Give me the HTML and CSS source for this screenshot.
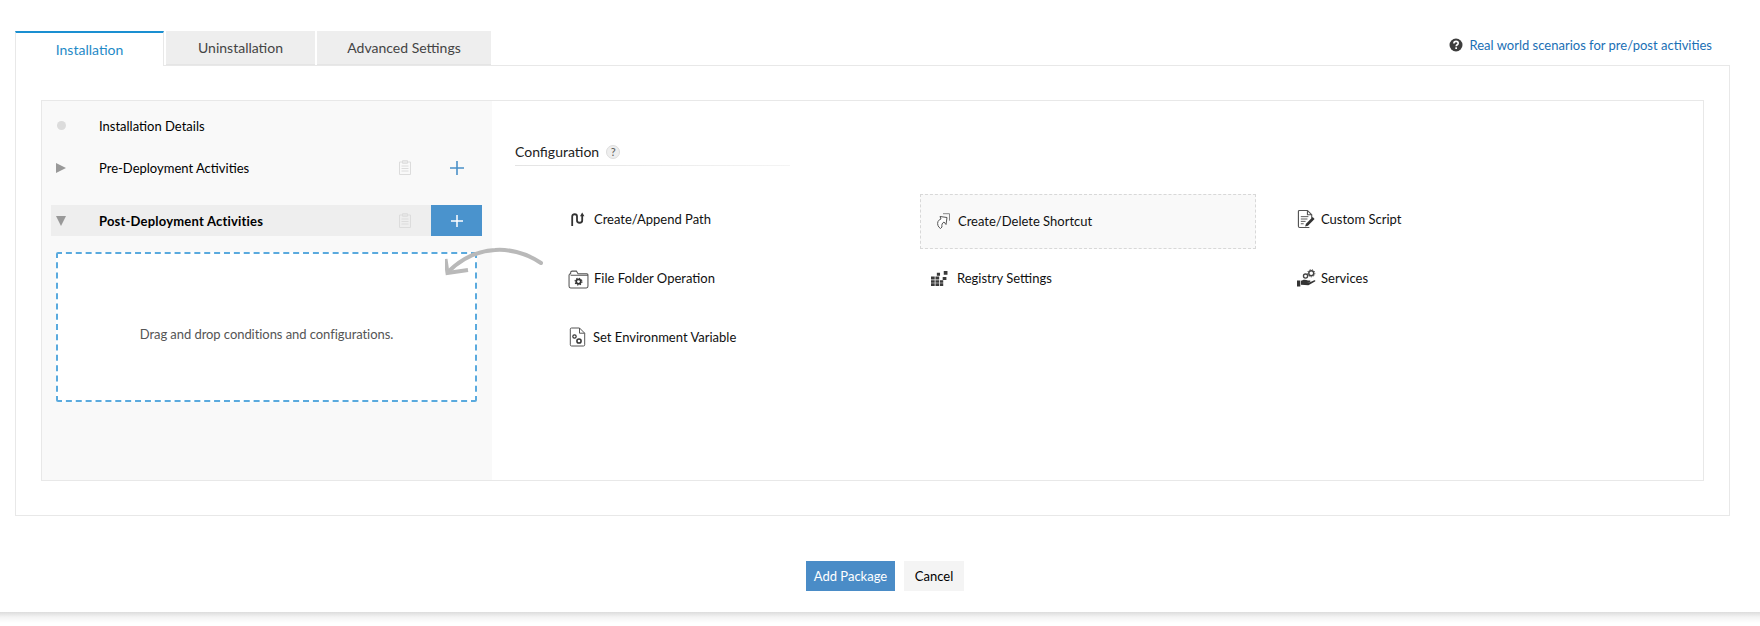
FILE: index.html
```html
<!DOCTYPE html>
<html lang="en">
<head>
<meta charset="utf-8">
<title>Add Package</title>
<link rel="stylesheet" href="styles.css">
</head>
<body>
<div class="page">
  <div class="tabbar">
    <div class="tab tab-active">Installation</div>
    <div class="tab tab-uninstall">Uninstallation</div>
    <div class="tab tab-advanced">Advanced Settings</div>
    <a class="help-link">
      <svg class="help-icon" viewBox="0 0 14 14"><circle cx="7" cy="7" r="6.5" fill="#3d3d3d"/><path d="M4.9 5.4c0-1.3 1-2 2.2-2s2.1.7 2.1 1.8c0 1.600-2 1.500-2 3" fill="none" stroke="#fff" stroke-width="1.600"/><rect x="6.300" y="9.300" width="1.700" height="1.700" fill="#fff"/></svg>
      Real world scenarios for pre/post activities
    </a>
  </div>
  <div class="panel">
    <div class="inner">
      <aside class="side">
        <div class="row row-details">
          <span class="marker"><span class="dot"></span></span>
          <span class="row-label">Installation Details</span>
        </div>
        <div class="row row-pre">
          <span class="marker"><span class="tri-right"></span></span>
          <span class="row-label">Pre-Deployment Activities</span>
          <svg class="clip" viewBox="0 0 12 15"><path d="M.5 2h11v12.500H.5zM3.500 .7h5v2.600h-5zM2.500 6h7M2.500 8.500h7M2.500 11h7" fill="none" stroke="#dcdcdc"/></svg>
          <span class="add"><svg class="plus" viewBox="0 0 14 14"><path d="M7 0v14M0 7h14" stroke="#4a90c8" stroke-width="1.600"/></svg></span>
        </div>
        <div class="row row-post">
          <span class="marker"><span class="tri-down"></span></span>
          <span class="row-label row-bold">Post-Deployment Activities</span>
          <svg class="clip" viewBox="0 0 12 15"><path d="M.5 2h11v12.500H.5zM3.500 .7h5v2.600h-5zM2.500 6h7M2.500 8.500h7M2.500 11h7" fill="none" stroke="#dcdcdc"/></svg>
          <span class="add add-on"><svg class="plus plus-sm" viewBox="0 0 12 12"><path d="M6 0v12M0 6h12" stroke="#fff" stroke-width="1.500"/></svg></span>
        </div>
        <div class="drop">Drag and drop conditions and configurations.</div>
      </aside>
      <main class="config">
        <div class="config-head">
          <span>Configuration</span>
          <span class="q">?</span>
        </div>
        <div class="grid">
          <div class="item">
            <svg class="ico ico-path" viewBox="0 0 14 14"><path d="M1.200 14V4.500C1.200 1.500 6 1.500 6 4.500v4c0 3 5.200 3 5.200 0V3" fill="none" stroke="#333" stroke-width="1.800"/><path d="M9 4.200 11.200 .5 13.400 4.200z" fill="#333"/></svg>
            <span>Create/Append Path</span>
          </div>
          <div class="item item-hi">
            <svg class="ico" viewBox="0 0 16 16"><path d="M8 .7h6.500v7" fill="none" stroke="#888"/><path d="M5 3.500l7 1-1 7-2-2.500c-2 1-2.500 3-2 5l-1.500 1.500C3 14 2 11 3 8.500c.5-1 1.500-2 3-2.500z" fill="#fff" stroke="#555"/></svg>
            <span>Create/Delete Shortcut</span>
          </div>
          <div class="item">
            <svg class="ico ico-lg" viewBox="0 0 20 21"><path d="M13 19.500H2.800a1.300 1.300 0 0 1-1.300-1.300V2.500a1 1 0 0 1 1-1h8.500l4.500 4.500v4M11 1.500V6h4.500" fill="none" stroke="#555" stroke-width="1.200"/><path d="M4 8h8M4 10.500h7M4 13h5M4 15.500h3" stroke="#555"/><path d="M8.500 18.500l1-3 7-7 2 2-7 7z" fill="#333"/></svg>
            <span>Custom Script</span>
          </div>
          <div class="item">
            <svg class="ico ico-folder" viewBox="0 0 20 18"><path d="M1 15.500V5a1.500 1.500 0 0 1 1.500-1.500V2.500A1.500 1.500 0 0 1 4 1h4l1.500 2.500H18a1 1 0 0 1 1 1v11a1.500 1.500 0 0 1-1.500 1.500h-15A1.500 1.500 0 0 1 1 15.500zM2.500 5H19" fill="none" stroke="#555"/><circle cx="10" cy="11" r="2.200" fill="none" stroke="#333" stroke-width="1.600"/><circle cx="10" cy="11" r="3.300" fill="none" stroke="#333" stroke-dasharray="1.200 1.400"/></svg>
            <span>File Folder Operation</span>
          </div>
          <div class="item">
            <svg class="ico ico-reg" viewBox="0 0 16 14"><path d="M0 5h3.500v3H0zM4.200 5h3.500v3H4.200zM0 8.700h3.500v2.400H0zM4.200 8.700h3.500v2.400H4.200zM8.400 8.700h3.100v2.400H8.400zM0 11.500h3.500V14H0zM4.200 11.500h3.500V14H4.200zM8.400 11.500h3.100V14H8.400zM5.500 1.500h3v3h-3zM12 0h3.500v3.500H12zM11 5.500h3.500v3H11z" fill="#3a3a3a"/></svg>
            <span>Registry Settings</span>
          </div>
          <div class="item">
            <svg class="ico ico-lg" viewBox="0 0 20 18"><path d="M0 11.500h3.500V18H0zM4.200 12c3-1.800 5-1.500 7.300-.3h2.300c.8.700.3 1.500-.5 1.500h-3l3.300.2 4.600-2c1.200-.3 1.500.7.700 1.300L12 16.500l-7.800-.3z" fill="#333"/><circle cx="9" cy="7" r="2.200" fill="none" stroke="#444" stroke-width="1.400"/><circle cx="15" cy="4" r="2.600" fill="none" stroke="#444" stroke-width="1.500"/><circle cx="15" cy="4" r="3.800" fill="none" stroke="#444" stroke-dasharray="1.200 1.400"/></svg>
            <span>Services</span>
          </div>
          <div class="item">
            <svg class="ico ico-env" viewBox="0 0 16 20"><path d="M10 1H2a1.200 1.200 0 0 0-1.200 1.200v15.600A1.200 1.200 0 0 0 2 19h12a1.200 1.200 0 0 0 1.200-1.200V6.200zM10 1v5.200h5.200" fill="none" stroke="#555"/><circle cx="5" cy="9.500" r="1.700" fill="none" stroke="#333" stroke-width="1.200"/><circle cx="9.500" cy="14" r="2.100" fill="none" stroke="#333" stroke-width="1.500"/></svg>
            <span>Set Environment Variable</span>
          </div>
        </div>
      </main>
      <svg class="arrow" viewBox="0 0 100 32"><path d="M96 18C80 7 62 4 50 5 30 6 14 16 3 27" fill="none" stroke="#b9b9b9" stroke-width="4" stroke-linecap="round"/><path d="M.5 14 2.500 28 23 25" fill="none" stroke="#b9b9b9" stroke-width="4"/></svg>
    </div>
  </div>
  <div class="actions">
    <button class="btn btn-primary">Add Package</button>
    <button class="btn btn-plain">Cancel</button>
  </div>
</div>
<div class="page-shade"></div>
</body>
</html>
```

FILE: styles.css
```css
* { box-sizing: border-box; }
html, body { margin: 0; padding: 0; background: #fff; }
body { font-family: "Lato", "Liberation Sans", sans-serif; font-size: 13px; color: #000; overflow: hidden; }

.page {
  height: 612px;
  padding: 31px 30px 0 15px;
  background: #fff;
}
.page-shade { height: 11px; background: linear-gradient(180deg, #dcdcdc, #f3f3f3 45%, #fff); }

.tabbar { display: flex; align-items: flex-start; height: 35px; gap: 2px; position: relative; z-index: 1; }
.tab { height: 34px; background: #eee; color: #444; font-size: 14px; display: flex; align-items: center; justify-content: center; border-bottom: 1px solid #e5e5e5; }
.tab-active { width: 149px; height: 35px; background: #fff; color: #1f8ac7; border-top: 2px solid #1a8fd1; border-left: 1px solid #e8e8e8; border-right: 1px solid #e8e8e8; border-bottom: 0; }
.tab-uninstall { width: 149px; }
.tab-advanced { width: 174px; }
.help-link { margin-left: auto; margin-right: 18px; height: 28px; display: flex; align-items: center; gap: 7px; color: #1a6fb5; font-size: 13px; }
.help-icon { width: 14px; height: 14px; }

.panel { height: 451px; border: 1px solid #e8e8e8; padding: 34px 25px 0 25px; margin-top: -1px; }
.inner { height: 381px; display: flex; border: 1px solid #e8e8e8; position: relative; }

.side { width: 450px; flex: none; background: #f9f9f9; padding: 0 10px 0 9px; }
.row { display: flex; align-items: center; font-size: 13px; }
.row-details { height: 31px; margin-top: 9px; }
.row-pre { height: 31px; margin-top: 11px; }
.row-post { height: 31px; margin-top: 22px; background: #eee; }
.marker { width: 48px; flex: none; padding-left: 5px; display: flex; }
.row-label { flex: 1; }
.row-bold { font-weight: 700; letter-spacing: .2px; }
.dot { width: 9px; height: 9px; margin-left: 1px; border-radius: 50%; background: #dcdcdc; }
.tri-right { width: 0; height: 0; border-left: 10px solid #999; border-top: 5px solid transparent; border-bottom: 5px solid transparent; }
.tri-down { width: 0; height: 0; border-top: 10px solid #999; border-left: 5px solid transparent; border-right: 5px solid transparent; }
.clip { width: 12px; height: 15px; margin-right: 20px; }
.add { width: 51px; height: 31px; flex: none; display: flex; align-items: center; justify-content: center; }
.add-on { background: #4a93cd; }
.plus { width: 14px; height: 14px; }
.plus-sm { width: 12px; height: 12px; }
.drop { width: 421px; height: 150px; margin: 16px 0 0 5px; padding-top: 13px; background: #fff; border: 2px dashed #5aaade; border-radius: 2px; display: flex; align-items: center; justify-content: center; color: #555; font-size: 13px; letter-spacing: -.06px; }

.config { flex: 1; background: #fff; padding: 42px 0 0 23px; }
.config-head { width: 275px; height: 23px; padding-bottom: 5px; display: flex; align-items: center; gap: 7px; font-size: 14px; color: #222; border-bottom: 1px solid; border-image: linear-gradient(90deg, #e4e4e4, #f4f4f4) 1; }
.q { width: 14px; height: 14px; border-radius: 50%; background: #eee; border: 1px solid #ddd; color: #555; font-size: 11px; display: flex; align-items: center; justify-content: center; }
.grid { display: grid; grid-template-columns: 360px 367px 300px; grid-auto-rows: 59px; margin: 26px 0 0 45px; align-items: center; }
.item { height: 55px; display: flex; align-items: center; gap: 5px; padding: 0 0 5px 10px; font-size: 13px; color: #111; }
.ico { width: 16px; height: 16px; flex: none; }
.ico-path { width: 14px; height: 14px; margin: 0 4px 0 1px; }
.ico-lg { width: 19px; height: 20px; }
.ico-env { width: 17px; height: 20px; margin: 0 2px 0 -1px; }
.ico-folder { width: 21px; height: 19px; margin: 3px 0 0 -2px; }
.ico-reg { width: 17px; height: 15px; margin: 0 4px 0 1px; }
.item-hi { width: 336px; background: #f9f9f9; border: 1px dashed #d8d8d8; padding: 0 0 2px 14px; gap: 7px; }

.arrow { position: absolute; left: 403px; top: 144px; width: 100px; height: 32px; pointer-events: none; }

.actions { display: flex; justify-content: center; gap: 9px; margin-top: 45px; padding-left: 25px; }
.btn { height: 30px; border: 0; font: 13px "Lato", "Liberation Sans", sans-serif; padding: 0; }
.btn-primary { width: 89px; background: #4a8cc7; color: #fff; }
.btn-plain { width: 60px; background: #f4f4f4; color: #000; }
```
